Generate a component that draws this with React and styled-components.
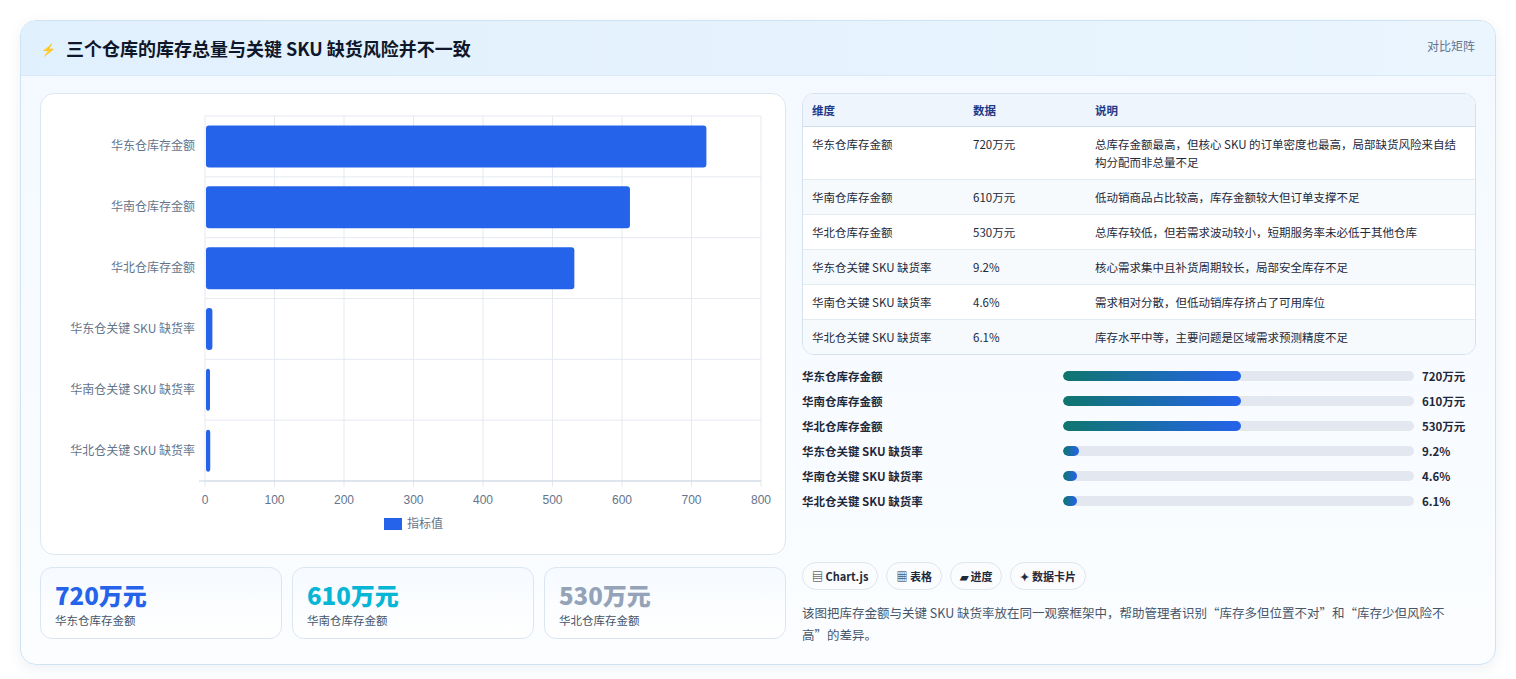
import React from "react";
import styled, { createGlobalStyle } from "styled-components";

const G = createGlobalStyle`
  body{margin:0;background:#f3f6fa;font-family:"Noto Sans CJK SC","Noto Sans",sans-serif;}
`;
const Page = styled.div`padding:20px 20px 22px 20px;background:#fff;`;
const Card = styled.div`border:1px solid #cfe3f3;border-radius:16px;overflow:hidden;background:linear-gradient(180deg,#f3f9ff,#fbfdff);box-shadow:0 4px 14px rgba(30,60,120,.08);`;
const Header = styled.div`height:54px;display:flex;align-items:center;justify-content:space-between;padding:0 20px;background:linear-gradient(90deg,#e1f0fd,#eaf5fe);border-bottom:1px solid #d8eaf8;`;
const Title = styled.h1`margin:0;font-size:18px;font-weight:700;color:#0f172a;display:flex;align-items:center;gap:10px;`;
const Tag = styled.span`font-size:12px;color:#64748b;align-self:flex-start;margin-top:16px;`;
const Body = styled.div`display:grid;grid-template-columns:746px 674px;gap:16px;padding:17px 19px 18px 19px;`;
const Col = styled.div`display:flex;flex-direction:column;`;
const ChartBox = styled.div`background:#fff;border:1px solid #dde7f1;border-radius:14px;height:460px;`;
const Stats = styled.div`display:grid;grid-template-columns:repeat(3,1fr);gap:10px;margin-top:12px;`;
const Stat = styled.div`border:1px solid #dbe6f2;border-radius:12px;background:linear-gradient(180deg,#f6faff,#fff);height:72px;padding:12px 14px;box-sizing:border-box;`;
const StatVal = styled.div`font-size:24px;font-weight:800;color:${p=>p.c};line-height:30px;`;
const StatLab = styled.div`font-size:11.5px;color:#475569;margin-top:2px;`;
const Table = styled.table`width:100%;border-collapse:collapse;font-size:11.5px;color:#1e293b;`;
const TWrap = styled.div`border:1px solid #d5e1ee;border-radius:12px;overflow:hidden;background:#fff;`;
const Th = styled.th`text-align:left;font-weight:600;color:#1e3a8a;background:#eef5fd;height:32px;padding:0 9px;border-bottom:1px solid #cfdcea;`;
const Td = styled.td`padding:8px 9px;border-top:1px solid #e3ebf3;line-height:18px;vertical-align:top;background:${p=>p.alt?"#f7fafd":"#fff"};`;
const Bars = styled.div`display:flex;flex-direction:column;gap:7px;margin-top:12px;`;
const BarRow = styled.div`display:grid;grid-template-columns:253px 351px 1fr;align-items:center;column-gap:8px;font-size:11.5px;font-weight:600;color:#1e293b;height:18px;`;
const Track = styled.div`height:10px;border-radius:5px;background:#e3e8f0;overflow:hidden;`;
const Fill = styled.div`height:100%;border-radius:5px;background:linear-gradient(90deg,#0f766e,#2563eb);`;
const Chips = styled.div`display:flex;gap:8px;margin-top:52px;`;
const Chip = styled.span`font-size:11px;font-weight:600;color:#1e293b;border:1px solid #dfe6ee;background:#fbfcfe;border-radius:14px;padding:5px 9px;`;
const Desc = styled.p`margin:12px 0 0;font-size:12.5px;line-height:22px;color:#475569;`;

const labels=["华东仓库存金额","华南仓库存金额","华北仓库存金额","华东仓关键 SKU 缺货率","华南仓关键 SKU 缺货率","华北仓关键 SKU 缺货率"];
const vals=[720,610,530,9.2,4.6,6.1];
const disp=["720万元","610万元","530万元","9.2%","4.6%","6.1%"];

function Chart(){
  const x0=164,x1=720,y0=22,y1=387,rh=(y1-y0)/6,k=(x1-x0)/800;
  return <svg width="746" height="460" style={{display:"block"}}>
    {[0,1,2,3,4,5,6,7,8].map(i=><g key={i}>
      <line x1={x0+i*69.5} x2={x0+i*69.5} y1={y0} y2={y1+6} stroke="#e5e9f0"/>
      <text x={x0+i*69.5} y={y1+23} fontSize="12" fill="#64748b" textAnchor="middle" fontFamily="Liberation Sans, sans-serif">{i*100}</text>
    </g>)}
    {[0,1,2,3,4,5,6].map(i=><line key={i} x1={x0} x2={x1} y1={y0+i*rh} y2={y0+i*rh} stroke="#e5e9f0"/>)}
    <line x1={x0-6} x2={x1} y1={y1} y2={y1} stroke="#cbd5e1"/>
    {labels.map((l,i)=><g key={i}>
      <text x={x0-10} y={y0+i*rh+rh/2+4} fontSize="12" fill="#64748b" textAnchor="end">{l}</text>
      <rect x={x0+1} y={y0+i*rh+9.5} width={Math.max(vals[i]*k,4)} height={42} rx="3" fill="#2563eb"/>
    </g>)}
    <rect x="343" y="424" width="18" height="12" fill="#2563eb"/>
    <text x="366" y="434" fontSize="12" fill="#64748b">指标值</text>
  </svg>;
}

const rows=[
 ["华东仓库存金额","720万元","总库存金额最高，但核心 SKU 的订单密度也最高，局部缺货风险来自结构分配而非总量不足"],
 ["华南仓库存金额","610万元","低动销商品占比较高，库存金额较大但订单支撑不足"],
 ["华北仓库存金额","530万元","总库存较低，但若需求波动较小，短期服务率未必低于其他仓库"],
 ["华东仓关键 SKU 缺货率","9.2%","核心需求集中且补货周期较长，局部安全库存不足"],
 ["华南仓关键 SKU 缺货率","4.6%","需求相对分散，但低动销库存挤占了可用库位"],
 ["华北仓关键 SKU 缺货率","6.1%","库存水平中等，主要问题是区域需求预测精度不足"],
];
const fills=[178,178,178,16,14,14];

export default function App(){
  return <Page><G/><Card>
    <Header><Title><span style={{color:"#2563eb",fontSize:12}}>⚡</span>三个仓库的库存总量与关键 SKU 缺货风险并不一致</Title><Tag>对比矩阵</Tag></Header>
    <Body>
      <Col>
        <ChartBox><Chart/></ChartBox>
        <Stats>
          <Stat><StatVal c="#2563eb">720万元</StatVal><StatLab>华东仓库存金额</StatLab></Stat>
          <Stat><StatVal c="#06b6d4">610万元</StatVal><StatLab>华南仓库存金额</StatLab></Stat>
          <Stat><StatVal c="#94a3b8">530万元</StatVal><StatLab>华北仓库存金额</StatLab></Stat>
        </Stats>
      </Col>
      <Col>
        <TWrap><Table>
          <thead><tr><Th style={{width:143}}>维度</Th><Th style={{width:104}}>数据</Th><Th>说明</Th></tr></thead>
          <tbody>{rows.map((r,i)=><tr key={i}>{r.map((c,j)=><Td key={j} alt={i%2===1}>{c}</Td>)}</tr>)}</tbody>
        </Table></TWrap>
        <Bars>{labels.map((l,i)=><BarRow key={i}><span>{l}</span><Track><Fill style={{width:fills[i]}}/></Track><span>{disp[i]}</span></BarRow>)}</Bars>
        <Chips><Chip>▤ Chart.js</Chip><Chip>▦ 表格</Chip><Chip>▰ 进度</Chip><Chip>✦ 数据卡片</Chip></Chips>
        <Desc>该图把库存金额与关键 SKU 缺货率放在同一观察框架中，帮助管理者识别“库存多但位置不对”和“库存少但风险不高”的差异。</Desc>
      </Col>
    </Body>
  </Card></Page>;
}
